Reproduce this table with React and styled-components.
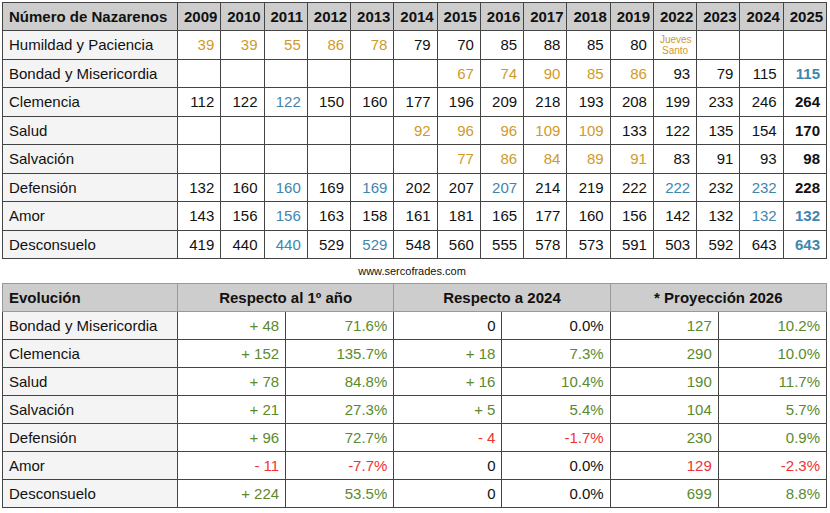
import React from 'react'
import styled, { createGlobalStyle } from 'styled-components'

const Global = createGlobalStyle`
  body {
    margin: 0;
    background: #fff;
    font-family: "Liberation Sans", Arial, sans-serif;
  }
`

const colors = {
  g: '#d09a2a',
  b: '#3e86ae',
  ok: '#5b8a2e',
  bad: '#f03232',
  n: '#111'
}

const Page = styled.div`
  width: 826px;
  padding: 2px 0 0 2px;
`

const Table = styled.table`
  width: 825px;
  border-collapse: collapse;
  table-layout: fixed;
  border: 1px solid #444;
  font-size: 15px;
  color: #111;
`

const Th = styled.th`
  background: #cdcdcd;
  border: 1px solid ${p => p.$soft ? '#999' : '#444'};
  height: 27px;
  padding: 0 6px;
  font-weight: bold;
  text-align: ${p => p.$left ? 'left' : 'center'};
  white-space: nowrap;
`

const Name = styled.td`
  background: #f4f4f4;
  border: 1px solid #444;
  height: ${p => p.$h || 27.5}px;
  padding: 0 6px;
  text-align: left;
  white-space: nowrap;
`

const Cell = styled.td`
  border: 1px solid #444;
  padding: 0 6px;
  text-align: right;
  white-space: nowrap;
  color: ${p => colors[p.$c] || '#111'};
  font-weight: ${p => p.$bold ? 'bold' : 'normal'};
`

const Note = styled.span`
  display: block;
  text-align: center;
  font-size: 10px;
  line-height: 11px;
  color: ${colors.g};
`

const Source = styled.div`
  height: 24px;
  display: flex;
  align-items: center;
  justify-content: center;
  font-size: 11px;
  color: #111;
  padding-right: 6px;
`

const years = [2009, 2010, 2011, 2012, 2013, 2014, 2015, 2016, 2017, 2018, 2019, 2022, 2023, 2024, 2025]

const rows = [
  ['Humildad y Paciencia', ['39g', '39g', '55g', '86g', '78g', '79', '70', '85', '88', '85', '80', 'JS', '', '', '']],
  ['Bondad y Misericordia', ['', '', '', '', '', '', '67g', '74g', '90g', '85g', '86g', '93', '79', '115', '115b']],
  ['Clemencia', ['112', '122', '122b', '150', '160', '177', '196', '209', '218', '193', '208', '199', '233', '246', '264']],
  ['Salud', ['', '', '', '', '', '92g', '96g', '96g', '109g', '109g', '133', '122', '135', '154', '170']],
  ['Salvación', ['', '', '', '', '', '', '77g', '86g', '84g', '89g', '91g', '83', '91', '93', '98']],
  ['Defensión', ['132', '160', '160b', '169', '169b', '202', '207', '207b', '214', '219', '222', '222b', '232', '232b', '228']],
  ['Amor', ['143', '156', '156b', '163', '158', '161', '181', '165', '177', '160', '156', '142', '132', '132b', '132b']],
  ['Desconsuelo', ['419', '440', '440b', '529', '529b', '548', '560', '555', '578', '573', '591', '503', '592', '643', '643b']]
]

const evolution = [
  ['Bondad y Misericordia', [['+ 48', 'ok'], ['71.6%', 'ok'], ['0'], ['0.0%'], ['127', 'ok'], ['10.2%', 'ok']]],
  ['Clemencia', [['+ 152', 'ok'], ['135.7%', 'ok'], ['+ 18', 'ok'], ['7.3%', 'ok'], ['290', 'ok'], ['10.0%', 'ok']]],
  ['Salud', [['+ 78', 'ok'], ['84.8%', 'ok'], ['+ 16', 'ok'], ['10.4%', 'ok'], ['190', 'ok'], ['11.7%', 'ok']]],
  ['Salvación', [['+ 21', 'ok'], ['27.3%', 'ok'], ['+ 5', 'ok'], ['5.4%', 'ok'], ['104', 'ok'], ['5.7%', 'ok']]],
  ['Defensión', [['+ 96', 'ok'], ['72.7%', 'ok'], ['- 4', 'bad'], ['-1.7%', 'bad'], ['230', 'ok'], ['0.9%', 'ok']]],
  ['Amor', [['- 11', 'bad'], ['-7.7%', 'bad'], ['0'], ['0.0%'], ['129', 'bad'], ['-2.3%', 'bad']]],
  ['Desconsuelo', [['+ 224', 'ok'], ['53.5%', 'ok'], ['0'], ['0.0%'], ['699', 'ok'], ['8.8%', 'ok']]]
]

const parse = v => {
  const last = v.slice(-1)
  if (last === 'g' || last === 'b') return [v.slice(0, -1), last]
  return [v, 'n']
}

const App = () => (
  <Page>
    <Global />
    <Table>
      <colgroup>
        <col style={{ width: 175 }} />
        {years.map(y => <col key={y} />)}
      </colgroup>
      <thead>
        <tr>
          <Th $left>Número de Nazarenos</Th>
          {years.map(y => <Th key={y}>{y}</Th>)}
        </tr>
      </thead>
      <tbody>
        {rows.map(([name, vals]) => (
          <tr key={name}>
            <Name>{name}</Name>
            {vals.map((v, i) => {
              if (v === 'JS') return <Cell key={i}><Note>Jueves<br />Santo</Note></Cell>
              const [txt, c] = parse(v)
              return <Cell key={i} $c={c} $bold={i === vals.length - 1}>{txt}</Cell>
            })}
          </tr>
        ))}
      </tbody>
    </Table>
    <Source>www.sercofrades.com</Source>
    <Table>
      <colgroup>
        <col style={{ width: 175 }} />
        {[0, 1, 2, 3, 4, 5].map(i => <col key={i} />)}
      </colgroup>
      <thead>
        <tr>
          <Th $left $soft>Evolución</Th>
          <Th colSpan={2} $soft>Respecto al 1º año</Th>
          <Th colSpan={2} $soft>Respecto a 2024</Th>
          <Th colSpan={2} $soft>* Proyección 2026</Th>
        </tr>
      </thead>
      <tbody>
        {evolution.map(([name, vals]) => (
          <tr key={name}>
            <Name $h={27}>{name}</Name>
            {vals.map(([txt, c], i) => <Cell key={i} $c={c}>{txt}</Cell>)}
          </tr>
        ))}
      </tbody>
    </Table>
  </Page>
)

export default App
